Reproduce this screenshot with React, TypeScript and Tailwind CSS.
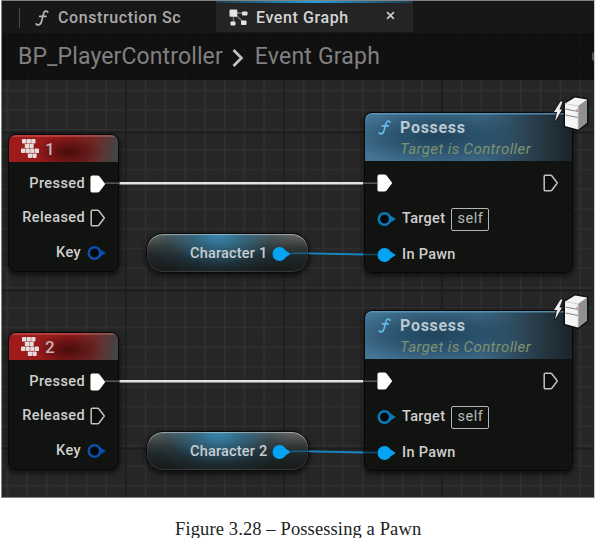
import type { ReactNode } from 'react';

interface Binding {
  keyName: string;
  character: string;
  top: string;
}

const bindings: Binding[] = [
  { keyName: '1', character: 'Character 1', top: 'top-[80px]' },
  { keyName: '2', character: 'Character 2', top: 'top-[278px]' },
];

export default function App() {
  return (
    <main className="h-[538px] w-[595px] overflow-hidden bg-white font-['Roboto',sans-serif]">
      <div className="ml-px flex h-[498px] w-[594px] flex-col overflow-hidden border-y border-r border-l border-[#7d8583] border-r-[#c8c8c8] bg-[#262626]">
        <TabBar />
        <div className="relative flex-1 overflow-hidden">
          <Grid />
          <Breadcrumb />
          {bindings.map((binding) => (
            <BindingRow key={binding.keyName} binding={binding} />
          ))}
        </div>
      </div>
      <p className="ml-[175px] mt-[19px] whitespace-nowrap font-['Liberation_Serif',serif] text-[18.5px] leading-[24px] tracking-[0.12px] text-[#222]">
        Figure 3.28 – Possessing a Pawn
      </p>
    </main>
  );
}

function TabBar() {
  return (
    <div className="flex h-8 shrink-0 items-start bg-[#171717]">
      <div className="flex h-8 w-[214px] items-center pl-[17px] pt-px">
        <div className="h-5 w-px bg-[#4a4a4a]" />
        <FunctionIcon className="ml-[15px] h-4 w-[14px] text-[#b4b4b4]" />
        <span className="ml-[9px] whitespace-nowrap text-[16px] font-medium leading-5 tracking-[0.6px] text-[#aaa]">
          Construction Sc
        </span>
      </div>
      <div className="relative flex h-[31px] w-[197px] items-center rounded-t bg-[#242424] pl-[13px] pt-[2px]">
        <div className="absolute inset-x-0 top-0 h-[2px] bg-gradient-to-r from-[#1b3d50] via-[#1d9fe0] to-[#1b3d50]" />
        <GraphIcon />
        <span className="ml-2 whitespace-nowrap text-[16px] font-medium leading-5 tracking-[0.6px] text-[#d4d4d4]">Event Graph</span>
        <svg className="absolute left-[170px] top-[10px] h-[9px] w-[9px]" viewBox="0 0 10 10" stroke="#c8c8c8" strokeWidth="2">
          <path d="M1.2 1.2L8.8 8.8M8.8 1.2L1.2 8.8" />
        </svg>
      </div>
    </div>
  );
}

function Breadcrumb() {
  return (
    <div className="relative flex h-[47px] items-center bg-[#0b0b0b]/80 pl-[16px] text-[23px] leading-7 text-[#808080]">
      <span className="whitespace-nowrap tracking-[0.12px]">BP_PlayerController</span>
      <svg className="ml-[9px] mt-[3px] h-[18px] w-[12px]" viewBox="0 0 12 18" fill="none" stroke="#c4c4c4" strokeWidth="2.6">
        <path d="M1.5 1L9.5 9L1.5 17" />
      </svg>
      <span className="ml-[11px] whitespace-nowrap tracking-[0.2px]">Event Graph</span>
      <div className="absolute right-0 top-[19px] h-[9px] w-[2px] rounded-l bg-[#555]" />
    </div>
  );
}

function Grid() {
  return (
    <svg className="absolute inset-0 h-full w-full" aria-hidden="true">
      <defs>
        <pattern id="minor" x="4.6" y="-2.6" width="19.75" height="19.75" patternUnits="userSpaceOnUse">
          <path d="M0.8 0V19.75M0 0.8H19.75" stroke="#323232" strokeWidth="1.3" />
        </pattern>
        <pattern id="major" x="122.8" y="98.4" width="158" height="158" patternUnits="userSpaceOnUse">
          <path d="M1 0V158M0 1H158" stroke="#191919" strokeWidth="1.6" />
        </pattern>
      </defs>
      <rect width="100%" height="100%" fill="url(#minor)" />
      <rect width="100%" height="100%" fill="url(#major)" />
    </svg>
  );
}

function BindingRow({ binding }: { binding: Binding }) {
  return (
    <div className={`absolute left-0 h-[170px] w-full ${binding.top}`}>
      <KeyNode name={binding.keyName} />
      <VariableNode name={binding.character} />
      <PossessNode />
      <Wires />
    </div>
  );
}

function Wires() {
  return (
    <svg className="pointer-events-none absolute left-0 top-0 h-[170px] w-[592px]" fill="none">
      <path d="M103 70.2H117" stroke="#555" strokeWidth="1.6" />
      <path d="M117.500 70.2H361" stroke="#e4e4e4" strokeWidth="2.4" />
      <path d="M361 70.2H375" stroke="#555" strokeWidth="1.6" />
      <path d="M289 140.300H307" stroke="#14608a" strokeWidth="1.5" />
      <path d="M307 140.300L361 141.500" stroke="#1689c4" strokeWidth="1.8" />
      <path d="M361 141.500H376" stroke="#104c6c" strokeWidth="1.5" />
    </svg>
  );
}

function KeyNode({ name }: { name: string }) {
  return (
    <section className="absolute left-[6px] top-[21px] h-[138px] w-[111px] overflow-hidden rounded-[8px] border border-[#080808] bg-[#10120f]/95 shadow-[0_2px_5px_1px_rgba(0,0,0,0.6)]">
      <header className="flex h-[27px] items-center bg-[radial-gradient(ellipse_34px_17px_at_60px_17px,rgba(48,8,8,0.75)_0%,rgba(60,10,10,0.4)_55%,transparent_100%),linear-gradient(100deg,#a01b1b_0%,#931a1a_55%,#6e2a2a_78%,#444_96%)] pl-[12px] shadow-[inset_0_2px_1px_rgba(255,150,150,0.3)]">
        <KeyboardIcon />
        <span className="ml-[6px] text-[17px] font-medium leading-5 text-[#c6b4b4]">{name}</span>
      </header>
      <div className="flex flex-col items-end pr-[12px] pt-[5px] text-[14.5px] font-medium leading-[34.300px] tracking-[0.4px] text-[#cfcfcf]">
        <Pin label="Pressed"><ExecPin filled /></Pin>
        <Pin label="Released"><ExecPin /></Pin>
        <Pin label="Key" wide><DataPin color="#0d4fae" /></Pin>
      </div>
    </section>
  );
}

function Pin({ label, wide, children }: { label: string; wide?: boolean; children: ReactNode }) {
  return (
    <div className={`flex h-[34.300px] items-center ${wide ? 'gap-[6px]' : 'gap-[5px]'}`}>
      <span>{label}</span>
      {children}
    </div>
  );
}

function VariableNode({ name }: { name: string }) {
  return (
    <section className="absolute left-[144px] top-[120px] flex h-[40px] w-[163px] items-center rounded-[17px] border border-[#0a0a0a] bg-[radial-gradient(ellipse_75px_46px_at_72px_0px,#3788b2_0%,rgba(44,103,132,0.8)_35%,rgba(34,68,86,0.35)_70%,transparent_100%),linear-gradient(180deg,#656765_0%,#353836_35%,#20282a_55%,#171918_100%)] pl-[43px] pt-px shadow-[0_2px_5px_1px_rgba(0,0,0,0.6),inset_0_1px_1px_rgba(220,220,220,0.55),inset_0_-1px_1px_rgba(140,140,140,0.3)]">
      <span className="w-[82px] whitespace-nowrap text-[14.5px] font-medium leading-5 tracking-[0.2px] text-[#c8cdd0]">{name}</span>
      <DataPin color="#05a3f3" filled />
    </section>
  );
}

function PossessNode() {
  return (
    <section className="absolute left-[362px] top-[-1px] h-[161px] w-[209px] rounded-[8px] border border-[#080808] bg-[#10120f]/95 shadow-[0_2px_5px_1px_rgba(0,0,0,0.6)]">
      <header className="flex h-[48px] rounded-t-[7px] bg-[radial-gradient(ellipse_90px_28px_at_70px_24px,rgba(19,50,71,0.7)_0%,rgba(19,50,71,0.4)_55%,transparent_100%),linear-gradient(90deg,#447596_0%,#3c6987_55%,#283d4b_82%,#1b2328_100%)] pl-[12px] pt-[4px] shadow-[inset_0_1.5px_0_rgba(91,153,190,0.85)]">
        <FunctionIcon className="mt-[3px] h-[15px] w-[15px] text-[#63bceb]" />
        <div className="ml-[8px] whitespace-nowrap">
          <h2 className="text-[16px] font-bold leading-[21px] tracking-[0.7px] text-[#bcc8d0]">Possess</h2>
          <p className="text-[15px] italic leading-[23px] tracking-[0.4px] text-[#7f916f]">Target is Controller</p>
        </div>
      </header>
      <div className="pl-[12px] pr-[13px] pt-[4px] text-[14.5px] font-medium leading-5 text-[#cfcfcf]">
        <div className="flex h-[36px] items-center justify-between">
          <ExecPin filled />
          <ExecPin />
        </div>
        <div className="flex h-[36px] items-center">
          <DataPin color="#087bbb" />
          <span className="ml-[6px] tracking-[0.3px]">Target</span>
          <span className="ml-[6px] flex h-[23px] w-[38px] items-center justify-center rounded-[2px] border-[1.5px] border-[#b5b5b5] font-normal tracking-[0.5px] text-[#b8b8b8]">self</span>
        </div>
        <div className="flex h-[36px] items-center">
          <DataPin color="#05a3f3" filled />
          <span className="ml-[6px] tracking-[0.3px]">In Pawn</span>
        </div>
      </div>
      <ServerBadge />
    </section>
  );
}

function ExecPin({ filled = false }: { filled?: boolean }) {
  return (
    <svg className="h-[18px] w-[16px] shrink-0" viewBox="0 0 16 18" fill={filled ? '#fff' : '#0c0d0c'} stroke={filled ? '#fff' : '#c2c2c2'} strokeWidth="1.5" strokeLinejoin="round">
      <path d="M2.300 1.200H7.500Q8.300 1.200 9 2L14.300 9L9 16Q8.300 16.800 7.500 16.800H2.300Q1.200 16.800 1.200 15.700V2.300Q1.200 1.200 2.300 1.200Z" />
    </svg>
  );
}

function DataPin({ color, filled = false }: { color: string; filled?: boolean }) {
  return (
    <svg className="h-[16px] w-[19px] shrink-0" viewBox="0 0 19 16">
      <path d="M13.500 4.500L18.800 8L13.500 11.500Z" fill={color} />
      <circle cx="7.500" cy="8" r="5.700" fill={filled ? color : '#060808'} stroke={color} strokeWidth="2.500" />
    </svg>
  );
}

function FunctionIcon({ className }: { className: string }) {
  return (
    <svg className={className} viewBox="0 0 14 16" fill="none" stroke="currentColor" strokeWidth="1.700" strokeLinecap="round" strokeLinejoin="round">
      <path d="M12.800 2.300Q12.300 1 10.800 1.100Q9 1.300 8.500 4L6.500 11.500Q5.600 14.700 3.200 14.800Q1.700 14.900 1.200 13.800" />
      <path d="M4.600 6.300H11" />
    </svg>
  );
}

function GraphIcon() {
  return (
    <svg className="h-[17px] w-[19px]" viewBox="0 0 19 17" fill="#e4e4e4">
      <path d="M6 4H15M6 5L14 13M4.500 6V14" fill="none" stroke="#777" strokeWidth="1.300" />
      <rect x="0.500" y="0.500" width="7.800" height="7.300" rx="1" />
      <rect x="13" y="2.500" width="5.500" height="4" rx="1" />
      <rect x="1.500" y="12.500" width="5" height="4" rx="1" />
      <rect x="12" y="11.500" width="5.500" height="4.500" rx="1" />
    </svg>
  );
}

function KeyboardIcon() {
  const keys = [
    [1, 0], [5.600, 0], [10.200, 0],
    [3.800, 4.800], [8.400, 4.800],
    [0, 9.600], [4.600, 9.600], [9.200, 9.600], [13.800, 9.600],
    [6.800, 14.400], [11.400, 14.400],
  ];
  return (
    <svg className="h-[19px] w-[18px]" viewBox="0 0 18 19" fill="#e3dddd">
      {keys.map(([x, y]) => (
        <rect key={`${x}-${y}`} x={x} y={y} width="4.300" height="4.500" rx="0.800" />
      ))}
    </svg>
  );
}

function ServerBadge() {
  return (
    <svg className="absolute left-[187px] top-[-18px] h-[38px] w-[38px] overflow-visible" viewBox="0 0 38 38">
      <path d="M8.500 6.500L2 17H5L3 26.500L10 14.500H7.500L10.500 6.500Z" fill="#eee" stroke="#151515" strokeWidth="2" paintOrder="stroke" strokeLinejoin="round" />
      <path d="M13 8.500L23 2.500L35 4.500V27.500L26 34.500L13 31Z" fill="#f5f5f5" stroke="#101010" strokeWidth="3" paintOrder="stroke" strokeLinejoin="round" />
      <path d="M26 11L35 4.500V27.500L26 34.500Z" fill="#909090" />
      <path d="M13 8.500L26 11V34" fill="none" stroke="#d0d0d0" strokeWidth="1" />
      <path d="M13.500 14L26 16.500M13.500 20L26 22.500" stroke="#858585" strokeWidth="1" />
      <circle cx="25" cy="15" r="0.900" fill="#e28585" />
    </svg>
  );
}
